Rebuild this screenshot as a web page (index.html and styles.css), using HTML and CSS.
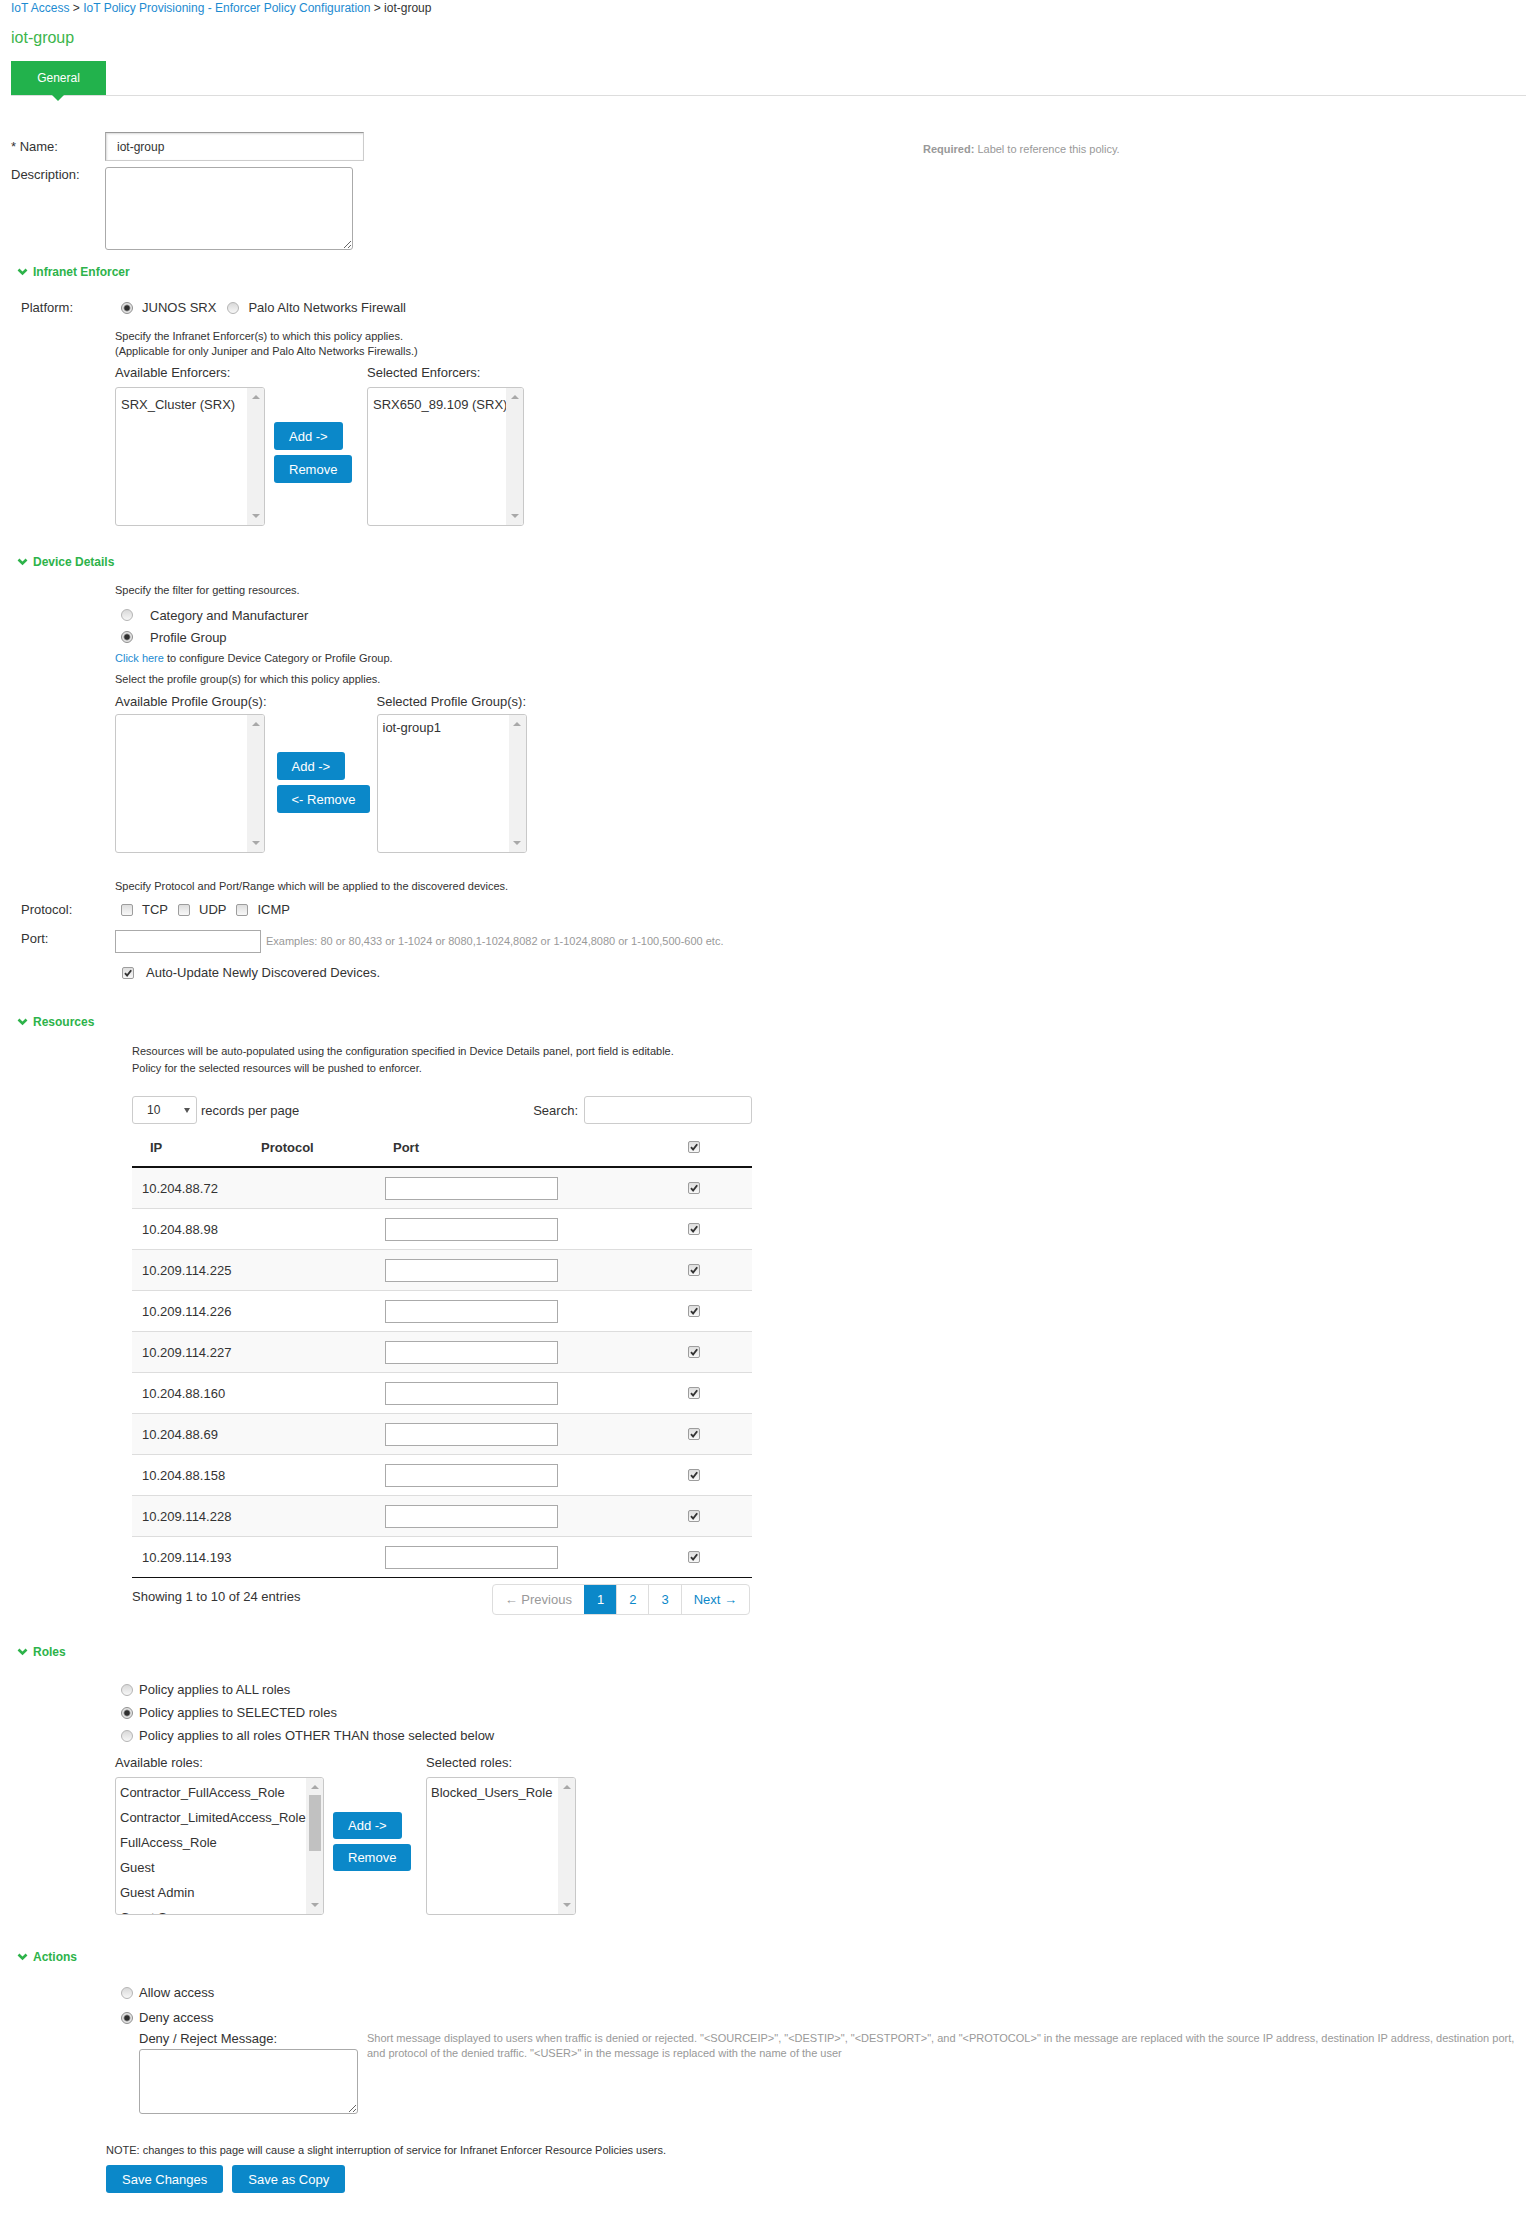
FILE: index.html
```html
<!DOCTYPE html>
<html>
<head>
    <title>iot-group</title>
    <link rel="stylesheet" href="styles.css">
</head>
<body>
<div class="page">
    <!-- breadcrumb + title -->
    <div class="crumbs"><a href="#">IoT Access</a> &gt; <a href="#">IoT Policy Provisioning - Enforcer Policy Configuration</a> &gt; iot-group</div>
    <h1 class="title">iot-group</h1>
    <div class="tabs"><span class="tab">General</span></div>

    <!-- name / description -->
    <div class="field-row name-row">
        <label class="field-lbl">* Name:</label>
        <input type="text" class="name-input" value="iot-group">
        <div class="req"><b>Required:</b> Label to reference this policy.</div>
    </div>
    <div class="field-row desc-row">
        <label class="field-lbl">Description:</label>
        <textarea class="desc"></textarea>
    </div>

    <!-- Infranet Enforcer -->
    <div class="sec-head">
        <svg class="chev" width="11" height="8" viewBox="0 0 11 8"><polyline points="1.5,1.5 5.5,5.5 9.5,1.5" fill="none" stroke="#2db34a" stroke-width="2.6"/></svg>
        Infranet Enforcer
    </div>
    <div class="sec">
        <div class="opt-row platform">
            <span class="opt-lbl">Platform:</span>
            <span class="radio on"></span><span class="gap9">JUNOS SRX</span>
            <span class="radio palo"></span><span class="gap9">Palo Alto Networks Firewall</span>
        </div>
        <div class="inner">
            <p class="small enf-note">Specify the Infranet Enforcer(s) to which this policy applies.<br>(Applicable for only Juniper and Palo Alto Networks Firewalls.)</p>
            <div class="dual enf">
                <div class="dcol">
                    <div class="dlbl">Available Enforcers:</div>
                    <div class="listbox w150">
                        <div class="items"><div>SRX_Cluster (SRX)</div></div>
                        <div class="sbar"><span class="up"></span><span class="dn"></span></div>
                    </div>
                </div>
                <div class="movers m-enf">
                    <button class="btn">Add -&gt;</button>
                    <button class="btn">Remove</button>
                </div>
                <div class="dcol">
                    <div class="dlbl">Selected Enforcers:</div>
                    <div class="listbox w157">
                        <div class="items"><div>SRX650_89.109 (SRX)</div></div>
                        <div class="sbar"><span class="up"></span><span class="dn"></span></div>
                    </div>
                </div>
            </div>
        </div>
    </div>

    <!-- Device Details -->
    <div class="sec-head dev-head">
        <svg class="chev" width="11" height="8" viewBox="0 0 11 8"><polyline points="1.5,1.5 5.5,5.5 9.5,1.5" fill="none" stroke="#2db34a" stroke-width="2.6"/></svg>
        Device Details
    </div>
    <div class="sec">
        <div class="inner">
            <p class="small filter-note">Specify the filter for getting resources.</p>
            <div class="filter-opts">
                <div class="filter-opt"><span class="radio"></span><span>Category and Manufacturer</span></div>
                <div class="filter-opt"><span class="radio on"></span><span>Profile Group</span></div>
            </div>
            <p class="small click-note"><a href="#">Click here</a> to configure Device Category or Profile Group.</p>
            <p class="small select-note">Select the profile group(s) for which this policy applies.</p>
            <div class="dual prof">
                <div class="dcol">
                    <div class="dlbl">Available Profile Group(s):</div>
                    <div class="listbox w150">
                        <div class="items"></div>
                        <div class="sbar"><span class="up"></span><span class="dn"></span></div>
                    </div>
                </div>
                <div class="movers m-prof">
                    <button class="btn">Add -&gt;</button>
                    <button class="btn">&lt;- Remove</button>
                </div>
                <div class="dcol">
                    <div class="dlbl">Selected Profile Group(s):</div>
                    <div class="listbox w150">
                        <div class="items"><div>iot-group1</div></div>
                        <div class="sbar"><span class="up"></span><span class="dn"></span></div>
                    </div>
                </div>
            </div>
            <p class="small proto-note">Specify Protocol and Port/Range which will be applied to the discovered devices.</p>
        </div>
        <div class="opt-row proto">
            <span class="opt-lbl">Protocol:</span>
            <span class="check"></span><span class="gap9">TCP</span>
            <span class="check"></span><span class="gap9">UDP</span>
            <span class="check"></span><span class="gap9">ICMP</span>
        </div>
        <div class="port-row">
            <span class="port-lbl">Port:</span>
            <input type="text" class="port-input">
            <span class="port-hint">Examples: 80 or 80,433 or 1-1024 or 8080,1-1024,8082 or 1-1024,8080 or 1-100,500-600 etc.</span>
        </div>
        <div class="inner auto-row">
            <span class="check on"><svg width="10" height="10" viewBox="0 0 10 10"><path d="M2 5.2 L4.1 7.6 L8.2 2.2" fill="none" stroke="#333" stroke-width="1.9"/></svg></span>
            <span>Auto-Update Newly Discovered Devices.</span>
        </div>
    </div>

    <!-- Resources -->
    <div class="sec-head res-head">
        <svg class="chev" width="11" height="8" viewBox="0 0 11 8"><polyline points="1.5,1.5 5.5,5.5 9.5,1.5" fill="none" stroke="#2db34a" stroke-width="2.6"/></svg>
        Resources
    </div>
    <div class="res">
        <p class="res-note">Resources will be auto-populated using the configuration specified in Device Details panel, port field is editable.<br>Policy for the selected resources will be pushed to enforcer.</p>
        <div class="res-controls">
            <div class="len">
                <span class="len-select">10<span class="caret"></span></span>
                <span>records per page</span>
            </div>
            <div class="search">
                <span>Search:</span>
                <input type="text" class="search-input">
            </div>
        </div>
        <table class="res-table">
            <thead>
                <tr>
                    <th class="c-ip">IP</th>
                    <th class="c-proto">Protocol</th>
                    <th class="c-port">Port</th>
                    <th class="c-ck"><span class="check on"><svg width="10" height="10" viewBox="0 0 10 10"><path d="M2 5.2 L4.1 7.6 L8.2 2.2" fill="none" stroke="#333" stroke-width="1.9"/></svg></span></th>
                </tr>
            </thead>
            <tbody id="rows"></tbody>
        </table>
        <div class="table-foot">
            <div class="showing">Showing 1 to 10 of 24 entries</div>
            <div class="pager">
                <span class="pg prev">&larr; Previous</span>
                <span class="pg active">1</span>
                <span class="pg">2</span>
                <span class="pg">3</span>
                <span class="pg next">Next &rarr;</span>
            </div>
        </div>
    </div>

    <!-- Roles -->
    <div class="sec-head roles-head">
        <svg class="chev" width="11" height="8" viewBox="0 0 11 8"><polyline points="1.5,1.5 5.5,5.5 9.5,1.5" fill="none" stroke="#2db34a" stroke-width="2.6"/></svg>
        Roles
    </div>
    <div class="sec">
        <div class="inner">
            <div class="role-opts">
                <div class="role-opt"><span class="radio"></span><span>Policy applies to ALL roles</span></div>
                <div class="role-opt"><span class="radio on"></span><span>Policy applies to SELECTED roles</span></div>
                <div class="role-opt"><span class="radio"></span><span>Policy applies to all roles OTHER THAN those selected below</span></div>
            </div>
            <div class="dual roles">
                <div class="dcol">
                    <div class="dlbl">Available roles:</div>
                    <div class="listbox w209 h138">
                        <div class="items">
                            <div>Contractor_FullAccess_Role</div>
                            <div>Contractor_LimitedAccess_Role</div>
                            <div>FullAccess_Role</div>
                            <div>Guest</div>
                            <div>Guest Admin</div>
                            <div>Guest Sponsor</div>
                        </div>
                        <div class="sbar"><span class="up"></span><span class="thumb"></span><span class="dn"></span></div>
                    </div>
                </div>
                <div class="movers m-roles">
                    <button class="btn">Add -&gt;</button>
                    <button class="btn">Remove</button>
                </div>
                <div class="dcol">
                    <div class="dlbl">Selected roles:</div>
                    <div class="listbox w150 h138">
                        <div class="items"><div>Blocked_Users_Role</div></div>
                        <div class="sbar"><span class="up"></span><span class="dn"></span></div>
                    </div>
                </div>
            </div>
        </div>
    </div>

    <!-- Actions -->
    <div class="sec-head act-head">
        <svg class="chev" width="11" height="8" viewBox="0 0 11 8"><polyline points="1.5,1.5 5.5,5.5 9.5,1.5" fill="none" stroke="#2db34a" stroke-width="2.6"/></svg>
        Actions
    </div>
    <div class="sec">
        <div class="inner">
            <div class="act-opts">
                <div class="act-opt"><span class="radio"></span><span>Allow access</span></div>
                <div class="act-opt"><span class="radio on"></span><span>Deny access</span></div>
            </div>
            <div class="deny">
                <div class="deny-left">
                    <div class="deny-lbl">Deny / Reject Message:</div>
                    <textarea class="deny-msg"></textarea>
                </div>
                <div class="deny-hint">Short message displayed to users when traffic is denied or rejected. "&lt;SOURCEIP&gt;", "&lt;DESTIP&gt;", "&lt;DESTPORT&gt;", and "&lt;PROTOCOL&gt;" in the message are replaced with the source IP address, destination IP address, destination port,<br>and protocol of the denied traffic. "&lt;USER&gt;" in the message is replaced with the name of the user</div>
            </div>
        </div>
    </div>

    <div class="footer">
        <p class="note">NOTE: changes to this page will cause a slight interruption of service for Infranet Enforcer Resource Policies users.</p>
        <div class="save-row">
            <button class="btn save">Save Changes</button>
            <button class="btn save">Save as Copy</button>
        </div>
    </div>
</div>

<script>
    // resource rows
    var ips = ['10.204.88.72', '10.204.88.98', '10.209.114.225', '10.209.114.226', '10.209.114.227',
               '10.204.88.160', '10.204.88.69', '10.204.88.158', '10.209.114.228', '10.209.114.193'];
    var tick = '<span class="check on"><svg width="10" height="10" viewBox="0 0 10 10"><path d="M2 5.2 L4.1 7.6 L8.2 2.2" fill="none" stroke="#333" stroke-width="1.9"/></svg></span>';
    var body = document.getElementById('rows');
    var html = '';
    for (var i = 0; i < ips.length; i++) {
        html += '<tr><td>' + ips[i] + '</td><td></td><td><input type="text" class="cell-input"></td><td class="c-ck">' + tick + '</td></tr>';
    }
    body.innerHTML = html;
</script>
</body>
</html>
```

FILE: styles.css
```css
/* page */
body {
    margin: 0;
    font-family: "Liberation Sans", Arial, sans-serif;
    font-size: 13px;
    color: #333;
    background: #fff;
}
.page {
    padding: 0 3px 20px 11px;
}
a {
    color: #1d8bd1;
    text-decoration: none;
}
p {
    margin: 0;
}
.crumbs {
    font-size: 12px;
    line-height: 16px;
}
.title {
    margin: 12px 0 0;
    font-size: 16px;
    line-height: 20px;
    font-weight: normal;
    color: #3cb54b;
}
.tabs {
    display: flex;
    margin-top: 13px;
    border-bottom: 1px solid #ddd;
}
.tab {
    position: relative;
    width: 95px;
    height: 34px;
    line-height: 34px;
    text-align: center;
    background: #22b24c;
    color: #fff;
    font-size: 12px;
}
.tab::after {
    content: "";
    position: absolute;
    left: 41px;
    top: 34px;
    border-left: 6px solid transparent;
    border-right: 6px solid transparent;
    border-top: 6px solid #22b24c;
}

/* name / description */
.field-row {
    display: flex;
}
.name-row {
    margin-top: 36px;
    align-items: center;
}
.desc-row {
    margin-top: 6px;
    align-items: flex-start;
}
.field-lbl {
    width: 94px;
    line-height: 16px;
    font-size: 13px;
}
.name-input {
    box-sizing: border-box;
    width: 259px;
    height: 29px;
    padding: 0 11px;
    border: 1px solid #ccc;
    border-top-color: #999;
    border-left-color: #aaa;
    box-shadow: inset 1px 1px 2px rgba(0, 0, 0, 0.15);
    font: 12px "Liberation Sans", Arial, sans-serif;
    color: #333;
}
.req {
    margin-left: 559px;
    padding-top: 4px;
    font-size: 11px;
    color: #999;
}
.desc {
    box-sizing: border-box;
    width: 248px;
    height: 83px;
    margin: 0;
    border: 1px solid #aaa;
    border-radius: 3px;
}

/* section headers */
.sec-head {
    display: flex;
    align-items: center;
    gap: 5px;
    margin-top: 14px;
    padding-left: 6px;
    line-height: 16px;
    font-size: 12px;
    font-weight: bold;
    color: #2db34a;
}
.dev-head { margin-top: 28px; }
.res-head { margin-top: 33px; }
.roles-head { margin-top: 29px; }
.act-head { margin-top: 34px; }

.sec {
    padding-left: 10px;
}
.inner {
    margin-left: 94px;
}
.small {
    font-size: 11px;
    line-height: 15px;
}

/* radios and checkboxes */
.radio {
    display: inline-block;
    box-sizing: border-box;
    width: 12px;
    height: 12px;
    border: 1px solid #b5b5b5;
    border-radius: 50%;
    background: linear-gradient(#d9d9d9, #f7f7f7);
    flex: none;
}
.radio.on {
    border-color: #8f8f8f;
    background: radial-gradient(circle, #2f2f2f 0, #2f2f2f 2.2px, #8c8c8c 3px, #dedede 3.8px, #f2f2f2 100%);
}
.check {
    display: inline-flex;
    align-items: center;
    justify-content: center;
    box-sizing: border-box;
    width: 12px;
    height: 12px;
    border: 1px solid #9d9d9d;
    border-radius: 2px;
    background: linear-gradient(#dedede, #f8f8f8);
    flex: none;
}

.opt-row {
    display: flex;
    align-items: center;
    line-height: 16px;
}
.opt-lbl {
    width: 100px;
}
.platform {
    margin-top: 20px;
}
.platform .gap9 {
    margin-left: 9px;
    margin-right: 11px;
}
.proto {
    margin-top: 8px;
}
.proto .gap9 {
    margin-left: 9px;
    margin-right: 10px;
}

/* dual list boxes */
.enf-note {
    margin-top: 13px;
}
.dual {
    display: flex;
    align-items: flex-start;
    margin-top: 6px;
}
.dlbl {
    line-height: 16px;
    margin-bottom: 6px;
    white-space: nowrap;
}
.listbox {
    display: flex;
    box-sizing: border-box;
    height: 139px;
    border: 1px solid #c8c8c8;
    border-radius: 3px;
    overflow: hidden;
    background: #fff;
}
.w150 { width: 150px; }
.w157 { width: 157px; }
.w209 { width: 209px; }
.h138 { height: 138px; }
.items {
    flex: 1;
    padding: 4px 0 0 5px;
    overflow: hidden;
    line-height: 25px;
    white-space: nowrap;
}
.sbar {
    display: flex;
    flex-direction: column;
    align-items: center;
    width: 17px;
    flex: none;
    padding: 7px 0;
    box-sizing: border-box;
    background: #f1f1f1;
}
.up {
    width: 0;
    height: 0;
    border-left: 4px solid transparent;
    border-right: 4px solid transparent;
    border-bottom: 4px solid #a8a8a8;
}
.dn {
    width: 0;
    height: 0;
    margin-top: auto;
    border-left: 4px solid transparent;
    border-right: 4px solid transparent;
    border-top: 4px solid #a8a8a8;
}
.thumb {
    width: 12px;
    height: 56px;
    margin-top: 6px;
    background: #c1c1c1;
}
.movers {
    display: flex;
    flex-direction: column;
    align-items: flex-start;
    gap: 5px;
    box-sizing: border-box;
}
.m-enf { width: 102px; padding: 57px 0 0 9px; }
.m-prof { width: 110px; padding: 58px 0 0 10px; }
.m-roles { width: 102px; padding: 57px 0 0 9px; }
.btn {
    height: 28px;
    padding: 0 15px;
    border: none;
    border-radius: 3px;
    background: #0b88c9;
    color: #fff;
    font: 13px "Liberation Sans", Arial, sans-serif;
    cursor: pointer;
}
.m-roles .btn { height: 27px; }

/* device details */
.filter-note {
    margin-top: 13px;
}
.filter-opts {
    margin-top: 6px;
}
.filter-opt {
    display: flex;
    align-items: center;
    height: 22px;
}
.filter-opt .radio {
    margin: 0 17px 0 6px;
}
.click-note {
    margin-top: 3px;
}
.select-note {
    margin-top: 6px;
}
.prof {
    margin-top: 7px;
}
.prof .dlbl {
    margin-bottom: 4px;
}
.prof .items {
    padding-top: 0;
}
.proto-note {
    margin-top: 26px;
}
.port-row {
    display: flex;
    align-items: flex-start;
    margin-top: 12px;
}
.port-lbl {
    width: 94px;
    line-height: 16px;
    padding-top: 1px;
}
.port-input {
    box-sizing: border-box;
    width: 146px;
    height: 23px;
    margin: 0;
    border: 1px solid #aaa;
}
.port-hint {
    margin-left: 5px;
    line-height: 23px;
    font-size: 11px;
    color: #999;
}
.auto-row {
    display: flex;
    align-items: center;
    margin-top: 12px;
    line-height: 16px;
}
.auto-row .check {
    margin: 0 12px 0 7px;
}

/* resources */
.res {
    padding-left: 121px;
    width: 620px;
}
.res-note {
    margin-top: 13px;
    font-size: 11px;
    line-height: 17px;
}
.res-controls {
    display: flex;
    justify-content: space-between;
    align-items: center;
    margin-top: 19px;
}
.len, .search {
    display: flex;
    align-items: center;
    gap: 4px;
}
.len-select {
    display: flex;
    align-items: center;
    box-sizing: border-box;
    width: 65px;
    height: 28px;
    padding-left: 14px;
    border: 1px solid #ccc;
    border-radius: 3px;
    font-size: 12px;
}
.caret {
    margin-left: 24px;
    border-left: 3px solid transparent;
    border-right: 3px solid transparent;
    border-top: 5px solid #555;
}
.search {
    gap: 6px;
}
.search-input {
    box-sizing: border-box;
    width: 168px;
    height: 28px;
    margin: 0;
    border: 1px solid #ccc;
    border-radius: 3px;
}
.res-table {
    width: 620px;
    margin-top: 4px;
    border-collapse: collapse;
    table-layout: fixed;
}
.res-table th {
    height: 38px;
    padding: 0 0 0 18px;
    text-align: left;
    font-weight: bold;
    border-bottom: 2px solid #111;
}
.res-table th.c-ip { width: 93px; }
.res-table th.c-proto { width: 114px; }
.res-table th.c-port { width: 285px; }
.res-table .c-ck { padding-left: 10px; }
.res-table td {
    height: 40px;
    padding: 0 0 0 10px;
    border-top: 1px solid #ddd;
}
.res-table tbody tr:nth-child(odd) td {
    background: #f9f9f9;
}
.res-table tbody tr:last-child td {
    border-bottom: 1px solid #111;
}
.cell-input {
    box-sizing: border-box;
    width: 173px;
    height: 23px;
    margin: 0;
    border: 1px solid #aaa;
    background: #fff;
}
.table-foot {
    display: flex;
    justify-content: space-between;
    align-items: flex-start;
    margin-top: 6px;
}
.showing {
    padding-top: 5px;
    line-height: 16px;
}
.pager {
    display: flex;
    margin-right: 2px;
    border: 1px solid #ddd;
    border-radius: 4px;
    overflow: hidden;
}
.pg {
    height: 29px;
    line-height: 29px;
    padding: 0 12px;
    border-left: 1px solid #ddd;
    color: #0b88c9;
}
.pg.prev {
    border-left: none;
    color: #999;
}
.pg.active {
    background: #0b88c9;
    color: #fff;
    border-left-color: #0b88c9;
}

/* roles */
.role-opts {
    margin-top: 18px;
}
.role-opt, .act-opt {
    display: flex;
    align-items: center;
    height: 23px;
}
.role-opt .radio, .act-opt .radio {
    margin: 0 6px 0 6px;
}
.roles {
    margin-top: 8px;
}
.roles .dlbl {
    margin-bottom: 6px;
}
.roles .items {
    padding: 2px 0 0 4px;
}

/* actions */
.act-opts {
    margin-top: 15px;
}
.act-opt {
    height: 25px;
}
.deny {
    display: flex;
    align-items: flex-start;
    margin-top: 1px;
    margin-left: 24px;
}
.deny-left {
    width: 219px;
    flex: none;
}
.deny-lbl {
    line-height: 16px;
}
.deny-msg {
    display: block;
    box-sizing: border-box;
    width: 219px;
    height: 65px;
    margin: 2px 0 0;
    border: 1px solid #aaa;
    border-radius: 3px;
}
.deny-hint {
    margin-left: 9px;
    font-size: 11px;
    line-height: 15px;
    color: #999;
}

/* footer */
.footer {
    padding-left: 95px;
}
.note {
    margin-top: 29px;
    font-size: 11px;
    line-height: 15px;
}
.save-row {
    display: flex;
    gap: 9px;
    margin-top: 7px;
}
.btn.save {
    padding: 0 16px;
}
```
